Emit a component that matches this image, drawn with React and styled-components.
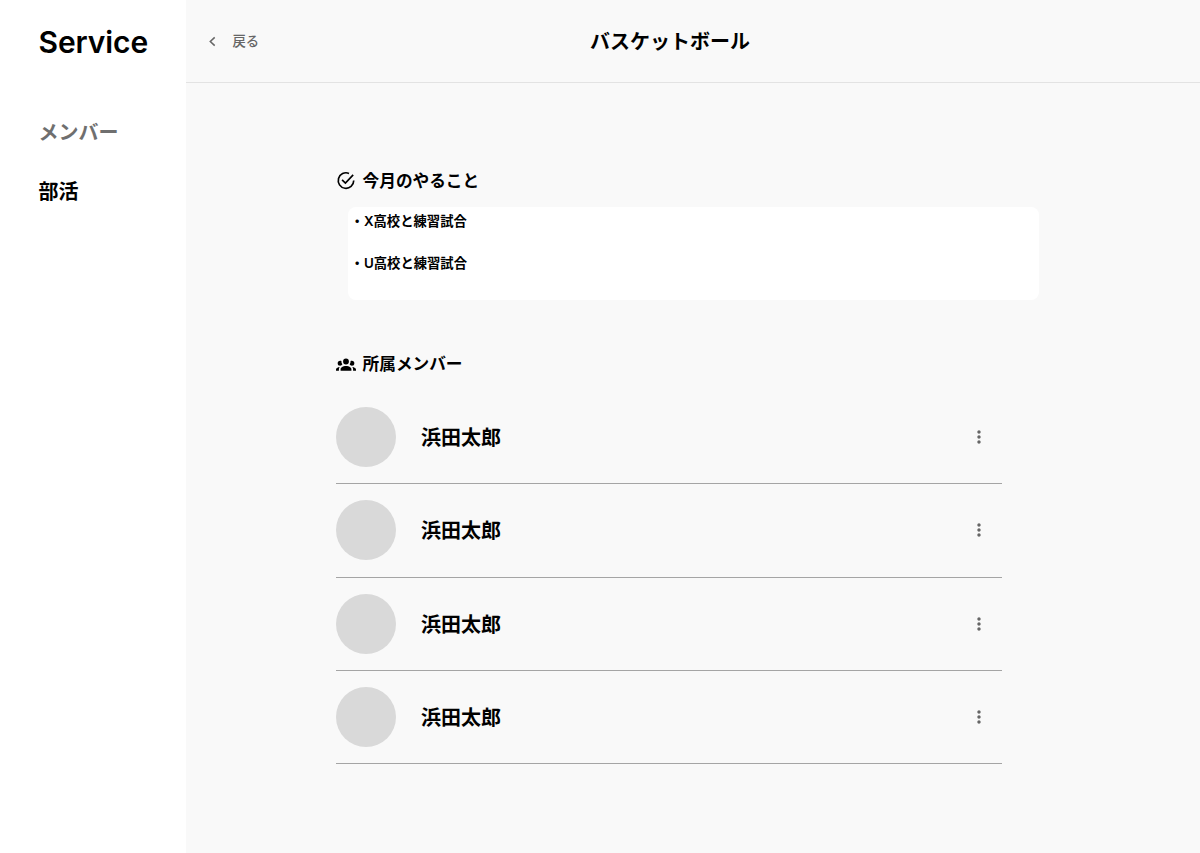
import React from 'react';
import styled, {createGlobalStyle} from 'styled-components';
import {MdMoreVert} from 'react-icons/md';


const GlobalStyle = createGlobalStyle`
    * {
        box-sizing: border-box;
    }

    body {
        margin: 0;
        background: #f9f9f9;
        color: #000;
        font-family: Inter, 'Noto Sans CJK JP', sans-serif;
        font-weight: 600;
    }
`;

const Page = styled.div`
    display: flex;
    height: 100vh;
    overflow: hidden;
`;

const Sidebar = styled.aside`
    flex: none;
    width: 186px;
    padding: 22px 0 0 38.5px;
    background: #fff;
`;

const Logo = styled.h1`
    margin: 0;
    font-size: 30px;
    font-weight: 600;
    letter-spacing: -0.1px;
    line-height: 40px;
`;

const Nav = styled.nav`
    display: flex;
    flex-direction: column;
    gap: 29px;
    margin-top: 56px;
`;

const NavItem = styled.a`
    color: ${props => props.$active ? '#000' : '#6f6f6f'};
    font-size: 20px;
    line-height: 30px;
`;

const Main = styled.main`
    flex: 1;
`;

const Header = styled.header`
    display: grid;
    grid-template-columns: 1fr auto 1fr;
    align-items: center;
    height: 83px;
    padding: 0 64px 0 18px;
    border-bottom: 1px solid #e3e3e3;
`;

const BackButton = styled.button`
    display: flex;
    align-items: center;
    justify-self: start;
    gap: 10.5px;
    padding: 0;
    border: 0;
    background: none;
    color: #666;
    font: inherit;
    font-size: 13.33px;
    font-weight: 500;
    line-height: 20px;
`;

const ChevronIcon = styled.svg`
    width: 18px;
    height: 18px;
`;

const Title = styled.h2`
    margin: 0;
    padding-top: 2px;
    font-size: 20px;
    font-weight: 600;
    line-height: 30px;
`;

const Content = styled.div`
    width: 703px;
    margin: 84.5px 0 0 149.6px;
`;

const SectionTitle = styled.h3`
    display: flex;
    align-items: center;
    gap: 7px;
    margin: 0;
    font-size: 16.67px;
    font-weight: 600;
    line-height: 26px;
`;

const TaskList = styled.ul`
    display: flex;
    flex-direction: column;
    gap: 21.7px;
    height: 93px;
    margin: 13.5px 0 51px 12px;
    padding: 4px 3px;
    border-radius: 8px;
    background: #fff;
    list-style: none;
    font-size: 13.33px;
    line-height: 20px;
`;

const MemberList = styled.ul`
    width: 666.6px;
    margin: 14px 0 0;
    padding: 0;
    list-style: none;
`;

const MemberRow = styled.li`
    display: flex;
    align-items: center;
    height: 93.33px;
    padding-right: 13.6px;
    border-bottom: 1px solid #a5a5a5;
`;

const Avatar = styled.div`
    width: 60px;
    height: 60px;
    margin-right: 25.4px;
    border-radius: 50%;
    background: #d9d9d9;
`;

const MemberName = styled.span`
    flex: 1;
    padding-top: 2px;
    font-size: 20px;
    line-height: 30px;
`;

const MenuIcon = styled(MdMoreVert)`
    color: #666;
`;

const SectionIcon = styled.svg`
    flex: none;
    width: 20px;
    height: 20px;
`;

const CheckIcon = () => (
    <SectionIcon viewBox="0 0 24 24" fill="none" stroke="currentColor" strokeWidth="2">
        <path d="M21.3 11.5A9.3 9.3 0 1 1 15.6 2.9" />
        <path d="M7.3 10.6l4 4L20.6 4.7" />
    </SectionIcon>
);

const GroupIcon = () => (
    <SectionIcon viewBox="0 0 24 24" fill="currentColor">
        <path d="M12 5.5A3.5 3.5 0 0 1 15.5 9 3.5 3.5 0 0 1 12 12.5 3.5 3.5 0 0 1 8.5 9 3.5 3.5 0 0 1 12 5.5M5 8c.56 0 1.08.15 1.53.42-.15 1.43.27 2.85 1.13 3.96C7.16 13.34 6.16 14 5 14a3 3 0 0 1-3-3 3 3 0 0 1 3-3m14 0a3 3 0 0 1 3 3 3 3 0 0 1-3 3c-1.16 0-2.16-.66-2.66-1.62.86-1.11 1.28-2.53 1.13-3.96.45-.27.97-.42 1.53-.42M5.5 18.25c0-2.07 2.91-3.75 6.5-3.75s6.5 1.68 6.5 3.75V20h-13v-1.75M0 20v-1.5c0-1.39 1.89-2.56 4.45-2.9-.59.68-.95 1.62-.95 2.65V20H0m24 0h-3.5v-1.75c0-1.03-.36-1.97-.95-2.65 2.56.34 4.45 1.51 4.45 2.9V20z" />
    </SectionIcon>
);

const tasks = ['・X高校と練習試合', '・U高校と練習試合'];
const members = ['浜田太郎', '浜田太郎', '浜田太郎', '浜田太郎'];

const App = () => {
    return (
        <>
            <GlobalStyle />
            <Page>
                <Sidebar>
                    <Logo>Service</Logo>
                    <Nav>
                        <NavItem>メンバー</NavItem>
                        <NavItem $active>部活</NavItem>
                    </Nav>
                </Sidebar>
                <Main>
                    <Header>
                        <BackButton>
                            <ChevronIcon viewBox="0 0 18 18" fill="none" stroke="currentColor" strokeWidth="1.5">
                                <path d="M10.7 5.4L6.3 9.5l4.4 4.1" />
                            </ChevronIcon>
                            戻る
                        </BackButton>
                        <Title>バスケットボール</Title>
                    </Header>
                    <Content>
                        <SectionTitle>
                            <CheckIcon />
                            今月のやること
                        </SectionTitle>
                        <TaskList>
                            {tasks.map(task => <li key={task}>{task}</li>)}
                        </TaskList>
                        <SectionTitle>
                            <GroupIcon />
                            所属メンバー
                        </SectionTitle>
                        <MemberList>
                            {members.map((name, index) => (
                                <MemberRow key={index}>
                                    <Avatar />
                                    <MemberName>{name}</MemberName>
                                    <MenuIcon size={20} />
                                </MemberRow>
                            ))}
                        </MemberList>
                    </Content>
                </Main>
            </Page>
        </>
    );
};

export default App;
